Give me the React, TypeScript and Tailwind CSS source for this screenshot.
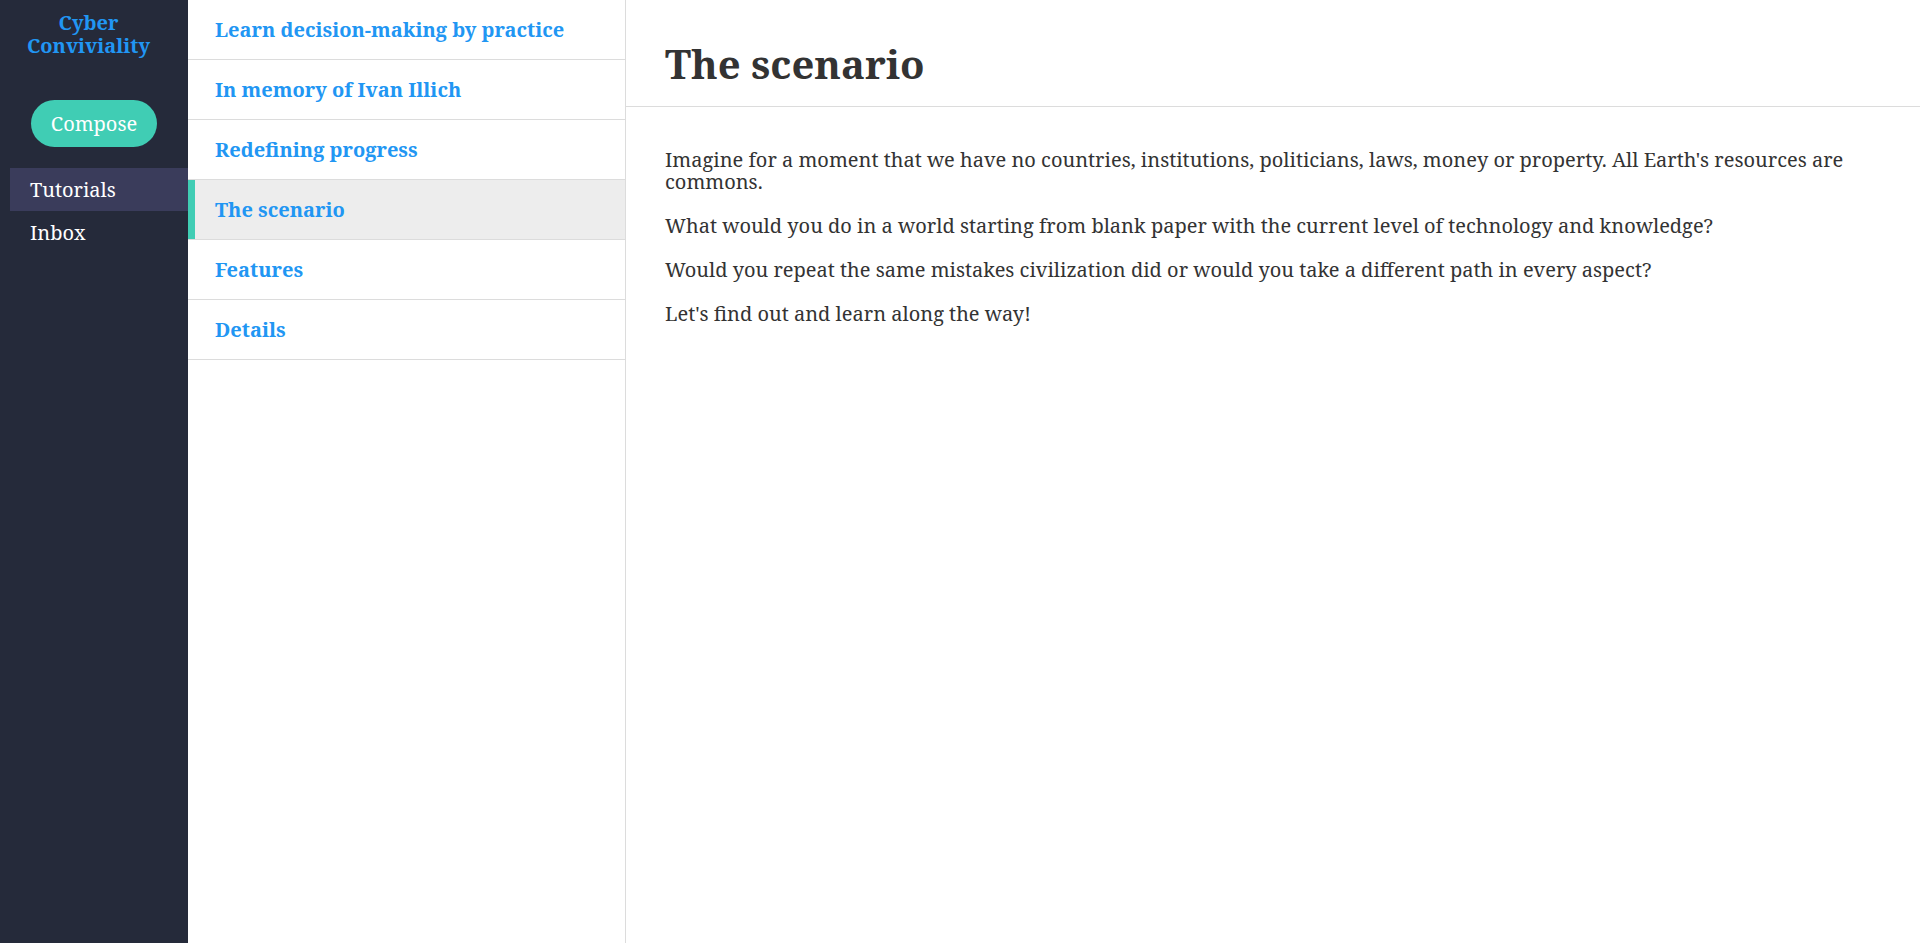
import React from "react";

const serif = { fontFamily: '"Noto Serif", "DejaVu Serif", "Liberation Serif", serif' };

const items = [
  "Learn decision-making by practice",
  "In memory of Ivan Illich",
  "Redefining progress",
  "The scenario",
  "Features",
  "Details",
];

export default function App() {
  return (
    <div className="flex h-screen w-full bg-white" style={serif}>
      <aside className="flex w-[188px] shrink-0 flex-col bg-[#252a3a]">
        <div className="pr-[11px] pt-[11px] text-center text-[20px] font-bold leading-[23px] text-[#2196f3]">
          Cyber
          <br />
          Conviviality
        </div>
        <div className="mt-[43px] flex pl-[31px]">
          <button className="h-[47px] w-[126px] rounded-full bg-[#40cdb4] text-[20px] text-white">
            Compose
          </button>
        </div>
        <nav className="mt-[21px] ml-[10px] flex flex-col">
          <div className="flex h-[43px] items-center bg-[#3a3c5b] pl-[20px] text-[20px] text-white">
            Tutorials
          </div>
          <div className="flex h-[43px] items-center pl-[20px] text-[20px] text-white">
            Inbox
          </div>
        </nav>
      </aside>

      <section className="w-[438px] shrink-0 border-r border-[#dcdcdc]">
        {items.map((t) => {
          const active = t === "The scenario";
          return (
            <div
              key={t}
              className={
                active
                  ? "flex h-[60px] border-b border-[#dcdcdc] bg-[#ededed]"
                  : "flex h-[60px] border-b border-[#dcdcdc]"
              }
            >
              <div className={active ? "w-[7px] bg-[#40cdb4]" : "w-[7px]"} />
              <div className="flex items-center pl-[20px] text-[20px] font-bold text-[#2196f3]">
                {t}
              </div>
            </div>
          );
        })}
      </section>

      <main className="flex-1">
        <header className="h-[107px] border-b border-[#dcdcdc] pl-[39px] pt-[40px]">
          <h1 className="text-[40px] font-bold leading-[48px] text-[#333333]">The scenario</h1>
        </header>
        <div className="pl-[39px] pr-[40px] pt-[42px] text-[20px] leading-[22px] text-[#333333]">
          <p className="mb-[22px]">
            Imagine for a moment that we have no countries, institutions, politicians, laws, money or property. All Earth's resources are commons.
          </p>
          <p className="mb-[22px]">
            What would you do in a world starting from blank paper with the current level of technology and knowledge?
          </p>
          <p className="mb-[22px]">
            Would you repeat the same mistakes civilization did or would you take a different path in every aspect?
          </p>
          <p className="mb-[22px]">Let's find out and learn along the way!</p>
        </div>
      </main>
    </div>
  );
}
